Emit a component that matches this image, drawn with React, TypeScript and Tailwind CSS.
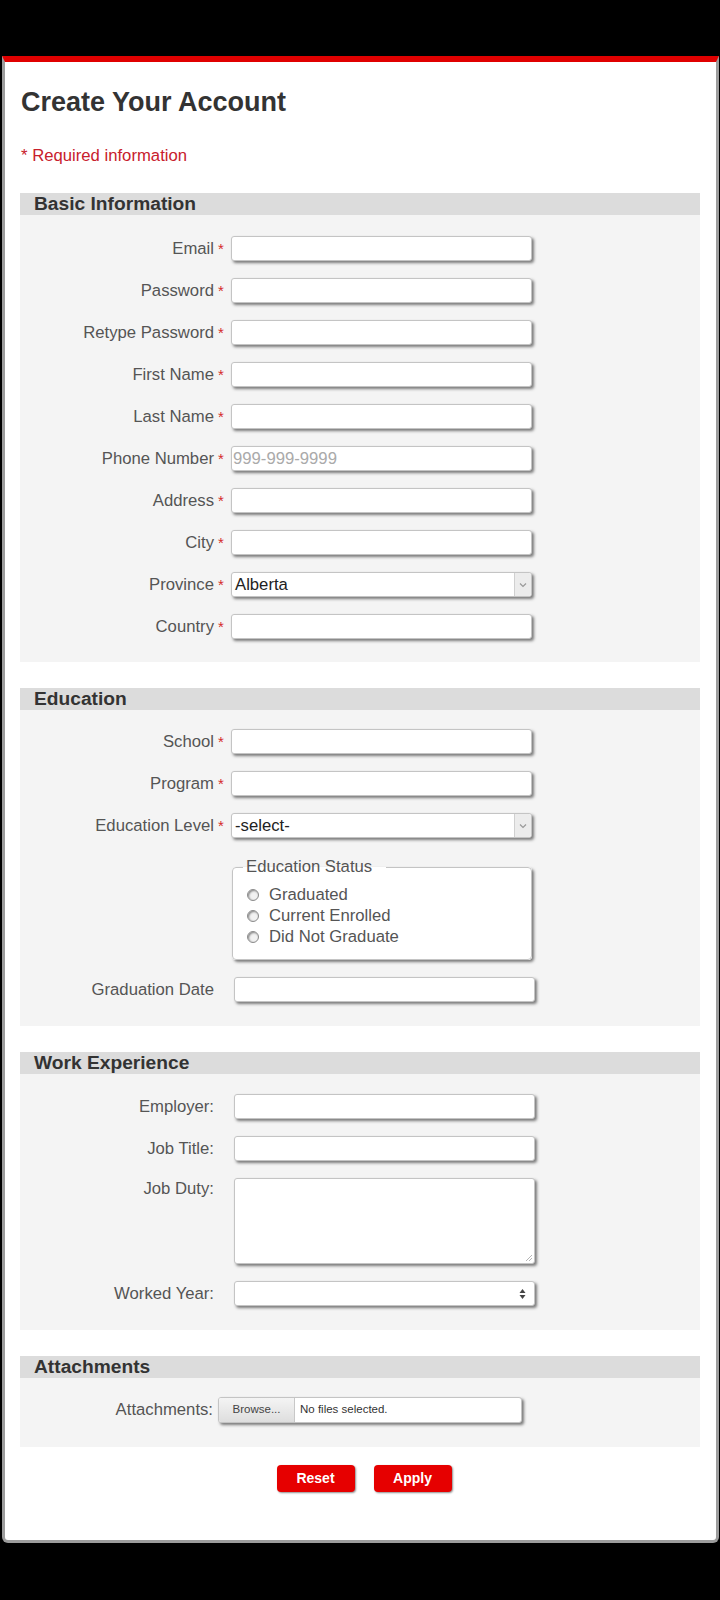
import React from "react";

const inputBase =
  "bg-white border border-[#c4c4c4] rounded-[3px] shadow-[2px_2px_3px_rgba(0,0,0,0.5)]";

function Label({ text, required, top }: { text: string; required?: boolean; top?: boolean }) {
  return (
    <div className={`flex ${top ? "items-start" : "items-center"} shrink-0`}>
      <div className={`w-[194px] text-right text-[#555] text-[16.7px] leading-[20px] ${top ? "pt-[1px]" : ""}`}>
        {text}
      </div>
      {required ? (
        <div className="w-[17px] pl-[4px] text-[#d42a2a] text-[15px] leading-[20px] self-start pt-[1px]">*</div>
      ) : null}
    </div>
  );
}

function TextRow({ label, required, placeholder }: { label: string; required?: boolean; placeholder?: string }) {
  return (
    <div className="flex items-center h-[25px]">
      <Label text={label} required={required} />
      <div
        className={`${inputBase} h-[25px] w-[301px] flex items-center pl-[1px] ${required ? "" : "ml-[20px]"}`}
      >
        {placeholder ? <span className="text-[#aaa] text-[16.7px] leading-[20px]">{placeholder}</span> : null}
      </div>
    </div>
  );
}

function SelectRow({ label, value }: { label: string; value: string }) {
  return (
    <div className="flex items-center h-[25px]">
      <Label text={label} required />
      <div className={`${inputBase} h-[25px] w-[301px] flex items-stretch overflow-hidden`}>
        <div className="flex-1 flex items-center pl-[3px] text-[#222] text-[16.7px] leading-[20px]">{value}</div>
        <div className="w-[17px] bg-[#ececec] border-l border-[#d0d0d0] flex items-center justify-center">
          <svg width="8" height="6" viewBox="0 0 8 6">
            <path d="M1 1.5 L4 4.5 L7 1.5" stroke="#999" strokeWidth="1.2" fill="none" />
          </svg>
        </div>
      </div>
    </div>
  );
}

function Section({ title, children, pt, pb }: { title: string; children: React.ReactNode; pt: string; pb: string }) {
  return (
    <div className="bg-[#f4f4f4]">
      <div className="bg-[#dcdcdc] h-[22px] pl-[14px] flex items-center">
        <span className="font-bold text-[19.2px] leading-[22px] text-[#333]">{title}</span>
      </div>
      <div className={`flex flex-col gap-[17px] ${pt} ${pb}`}>{children}</div>
    </div>
  );
}

function Radio({ label }: { label: string }) {
  return (
    <div className="flex items-center h-[21px]">
      <div className="w-[12px] h-[12px] rounded-full border border-[#8a8a8a] bg-[#f2f2f2] shadow-[inset_1px_1px_2px_rgba(0,0,0,0.45)] mr-[10px]" />
      <span className="text-[#555] text-[16.7px] leading-[21px]">{label}</span>
    </div>
  );
}

export default function App() {
  return (
    <div className="bg-black w-[720px] min-h-[1600px] pt-[56px] pb-[60px] font-['Liberation_Sans',Arial,sans-serif]">
      <div className="ml-[2px] mr-[1px] bg-white border-t-[6px] border-t-[#e00000] border-x-[3px] border-b-[3px] border-x-[#9c9c9c] border-b-[#9c9c9c] rounded-b-[6px] pl-[15px] pr-[16px] pt-[25px] pb-[48px]">
        <h1 className="font-bold text-[27px] leading-[30px] text-[#333] pl-[1px]">Create Your Account</h1>
        <div className="mt-[29px] text-[#c8202c] text-[16.7px] leading-[20px] pl-[1px]">* Required information</div>

        <div className="mt-[27px]">
          <Section title="Basic Information" pt="pt-[21px]" pb="pb-[23px]">
            <TextRow label="Email" required />
            <TextRow label="Password" required />
            <TextRow label="Retype Password" required />
            <TextRow label="First Name" required />
            <TextRow label="Last Name" required />
            <TextRow label="Phone Number" required placeholder="999-999-9999" />
            <TextRow label="Address" required />
            <TextRow label="City" required />
            <SelectRow label="Province" value="Alberta" />
            <TextRow label="Country" required />
          </Section>
        </div>

        <div className="mt-[26px]">
          <Section title="Education" pt="pt-[19px]" pb="pb-[24px]">
            <TextRow label="School" required />
            <TextRow label="Program" required />
            <SelectRow label="Education Level" value="-select-" />
            <div className="flex mt-[2px]">
              <div className="w-[212px] shrink-0" />
              <fieldset className="w-[300px] border border-[#c4c4c4] rounded-[4px] shadow-[2px_2px_3px_rgba(0,0,0,0.5)] bg-white pl-[14px] pr-[10px] pb-[12px] pt-[7px]">
                <legend className="-ml-[4px] pl-[3px] pr-[14px] text-[#555] text-[16.7px] leading-[20px]">
                  Education Status
                </legend>
                <Radio label="Graduated" />
                <Radio label="Current Enrolled" />
                <Radio label="Did Not Graduate" />
              </fieldset>
            </div>
            <TextRow label="Graduation Date" />
          </Section>
        </div>

        <div className="mt-[26px]">
          <Section title="Work Experience" pt="pt-[20px]" pb="pb-[24px]">
            <TextRow label="Employer:" />
            <TextRow label="Job Title:" />
            <div className="flex items-start">
              <Label text="Job Duty:" top />
              <div className={`${inputBase} ml-[20px] h-[86px] w-[301px] relative`}>
                <svg className="absolute right-[1px] bottom-[1px]" width="9" height="9" viewBox="0 0 9 9">
                  <path d="M8 2 L2 8 M8 5 L5 8" stroke="#b5b5b5" strokeWidth="1" />
                </svg>
              </div>
            </div>
            <div className="flex items-center h-[25px]">
              <Label text="Worked Year:" />
              <div className={`${inputBase} ml-[20px] h-[25px] w-[301px] flex items-center justify-end pr-[8px]`}>
                <svg width="7" height="12" viewBox="0 0 7 12">
                  <path d="M3.5 1 L6.5 5 L0.5 5 Z" fill="#444" />
                  <path d="M3.5 11 L6.5 7 L0.5 7 Z" fill="#444" />
                </svg>
              </div>
            </div>
          </Section>
        </div>

        <div className="mt-[26px]">
          <Section title="Attachments" pt="pt-[19px]" pb="pb-[24px]">
            <div className="flex items-center h-[26px]">
              <div className="w-[193px] text-right text-[#555] text-[16.7px] leading-[20px]">Attachments:</div>
              <div className={`${inputBase} ml-[5px] h-[26px] w-[304px] flex items-stretch overflow-hidden`}>
                <div className="w-[76px] bg-gradient-to-b from-[#f4f4f4] to-[#dedede] border-r border-[#c8c8c8] flex items-center justify-center text-[#444] text-[11.5px]">
                  Browse...
                </div>
                <div className="flex items-center pl-[5px] text-[#333] text-[11.5px]">No files selected.</div>
              </div>
            </div>
          </Section>
        </div>

        <div className="mt-[18px] flex justify-center gap-[19px] pl-[8px]">
          <button className="w-[78px] h-[27px] rounded-[4px] bg-[#e60000] shadow-[1px_1px_2px_rgba(0,0,0,0.45)] text-white font-bold text-[14px]">
            Reset
          </button>
          <button className="w-[78px] h-[27px] rounded-[4px] bg-[#e60000] shadow-[1px_1px_2px_rgba(0,0,0,0.45)] text-white font-bold text-[14px]">
            Apply
          </button>
        </div>
      </div>
    </div>
  );
}
